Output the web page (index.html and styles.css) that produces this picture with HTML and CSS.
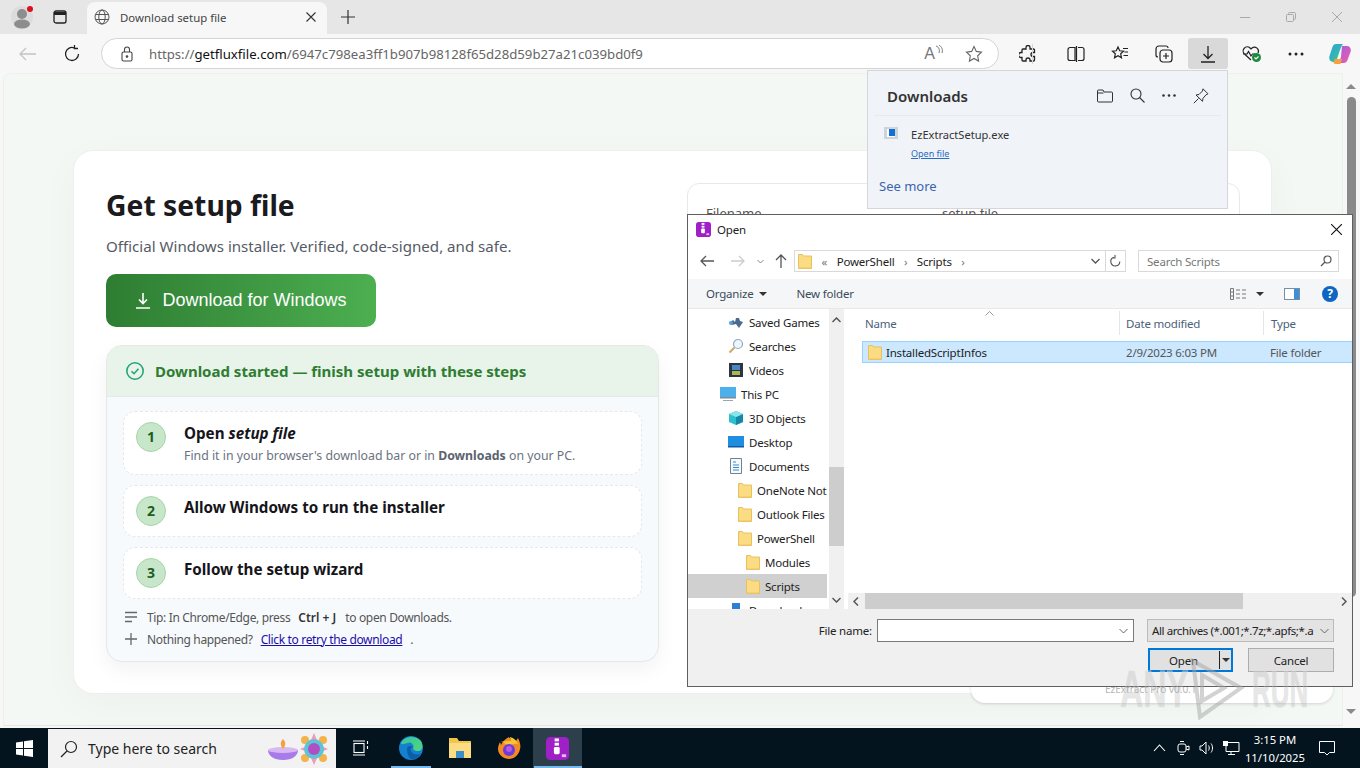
FILE: index.html
```html
<!DOCTYPE html>
<html lang="en">

<head>
  <meta charset="UTF-8">
  <title>Download setup file</title>
  <link rel="stylesheet" href="styles.css">
</head>

<body>
  <svg class="defs" width="0" height="0">
    <symbol id="folder" viewBox="0 0 14 16">
      <path d="M.5 1.500h4l1 1.500h8v12.500H.5z" fill="#fbdc82" stroke="#e6c161" stroke-width="1" />
      <path d="M1 14.500h12v1H1z" fill="#eec766" />
    </symbol>
    <symbol id="appicon" viewBox="0 0 16 16">
      <rect width="16" height="16" rx="3" fill="#a020c8" />
      <rect x="6" y="1" width="3" height="2" fill="#fff" />
      <rect x="6" y="4" width="3" height="2" fill="#fff" />
      <rect x="5.500" y="7" width="4" height="5" rx="1" fill="#fff" />
      <rect x="11" y="12" width="3" height="2" fill="#e6b8f2" />
    </symbol>
  </svg>

  <div class="desktop">
    <div class="tabstrip">
      <div class="avatar">
        <svg width="24" height="26" viewBox="0 0 24 26">
          <circle cx="11" cy="13" r="11" fill="#dcdcdc" />
          <circle cx="11" cy="10" r="5" fill="#8d8d8d" />
          <ellipse cx="11" cy="20" rx="8" ry="4.500" fill="#8d8d8d" />
          <circle cx="19" cy="5" r="3" fill="#d8121f" />
        </svg>
      </div>
      <svg class="tab-actions" width="16" height="16" viewBox="0 0 16 16" fill="none" stroke="#222" stroke-width="1.300">
        <rect x="2" y="2" width="12" height="12" rx="2" />
        <path d="M2 4.500h12" stroke-width="3" />
      </svg>
      <div class="tab">
        <svg width="16" height="16" viewBox="0 0 16 16" fill="none" stroke="#555" stroke-width="1">
          <circle cx="8" cy="8" r="7" />
          <ellipse cx="8" cy="8" rx="3.200" ry="7" />
          <path d="M1.500 5.500h13M1.500 10.500h13" />
        </svg>
        <span class="tab-title">Download setup file</span>
        <svg width="10" height="10" viewBox="0 0 10 10" stroke="#333" stroke-width="1.100">
          <path d="M.5.500l9 9M9.500.500l-9 9" />
        </svg>
      </div>
      <svg class="new-tab" width="14" height="14" viewBox="0 0 14 14" stroke="#333" stroke-width="1.200">
        <path d="M7 0v14M0 7h14" />
      </svg>
      <div class="win-controls">
        <svg width="10" height="10" viewBox="0 0 10 10" stroke="#a8a8a8"><path d="M0 5.500h10" /></svg>
        <svg width="10" height="10" viewBox="0 0 10 10" fill="none" stroke="#a8a8a8"><rect x=".5" y="2.500" width="7" height="7" rx="1" /><path d="M2.500 2.500v-1a1 1 0 0 1 1-1h5a1 1 0 0 1 1 1v5a1 1 0 0 1-1 1h-1" /></svg>
        <svg width="10" height="10" viewBox="0 0 10 10" stroke="#a8a8a8"><path d="M0 0l10 10M10 0L0 10" /></svg>
      </div>
    </div>

    <div class="toolbar">
      <svg class="tb-back" width="18" height="14" viewBox="0 0 18 14" fill="none" stroke="#c4c4c4" stroke-width="1.300">
        <path d="M17 7H1M7 1L1 7l6 6" />
      </svg>
      <svg class="tb-reload" width="18" height="18" viewBox="0 0 18 18" fill="none" stroke="#222" stroke-width="1.300">
        <path d="M15.500 9A6.500 6.500 0 1 1 11 2.800M11.500 0v3.500H15" />
      </svg>
      <div class="addressbar">
        <svg width="12" height="16" viewBox="0 0 12 16" fill="none" stroke="#444" stroke-width="1.100">
          <rect x="1" y="6" width="10" height="9" rx="1.500" />
          <path d="M3.500 6V3.500a2.500 2.500 0 0 1 5 0V6" />
          <circle cx="6" cy="10.500" r=".8" fill="#444" />
        </svg>
        <div class="url">https://<b>getfluxfile.com</b>/6947c798ea3ff1b907b98128f65d28d59b27a21c039bd0f9</div>
        <div class="read-aloud">A<svg width="8" height="10" viewBox="0 0 8 10" fill="none" stroke="#777"><path d="M1 1c3 1 4 4 3 7M4 0c3 2 4 5 3 8" /></svg></div>
        <svg width="18" height="18" viewBox="0 0 18 18" fill="none" stroke="#666" stroke-width="1.100">
          <path d="M9 1.500l2.300 4.900 5.200.7-3.800 3.700.9 5.300L9 13.500l-4.600 2.600.9-5.300L1.500 7.100l5.200-.7z" />
        </svg>
      </div>
      <div class="tb-icons">
        <span class="tb-slot">
          <svg width="18" height="18" viewBox="0 0 18 18" fill="none" stroke="#222" stroke-width="1.300">
            <path d="M7 2.500a2 2 0 0 1 4 0V4h3.500a1 1 0 0 1 1 1v2.500H14a2 2 0 0 0 0 4h1.500V15a1 1 0 0 1-1 1H11v-1a2 2 0 0 0-4 0v1H4a1 1 0 0 1-1-1v-2.500H2a2 2 0 0 1 0-5h1V5a1 1 0 0 1 1-1h3z" />
          </svg>
        </span>
        <span class="tb-sep"></span>
        <span class="tb-slot">
          <svg width="18" height="16" viewBox="0 0 18 16" fill="none" stroke="#222" stroke-width="1.200">
            <path d="M8 1.500H3a2 2 0 0 0-2 2v9a2 2 0 0 0 2 2h5zM9.500 0v16M11 1.500h4a2 2 0 0 1 2 2v9a2 2 0 0 1-2 2h-4" />
          </svg>
        </span>
        <span class="tb-slot">
          <svg width="18" height="18" viewBox="0 0 18 18" fill="none" stroke="#222" stroke-width="1.200">
            <path d="M7 2l1.700 3.800 3.800.4-2.800 2.600.8 4L7 10.800l-3.500 2 .8-4L1.500 6.200l3.800-.4zM12 3.500h5M13.500 7H17M12.500 10.500H17" />
          </svg>
        </span>
        <span class="tb-slot">
          <svg width="18" height="18" viewBox="0 0 18 18" fill="none" stroke="#222" stroke-width="1.200">
            <rect x="5" y="5" width="12" height="12" rx="3" />
            <path d="M11 8v6M8 11h6M13 3a2 2 0 0 0-2-2H4a3 3 0 0 0-3 3v6a2 2 0 0 0 2 2" />
          </svg>
        </span>
        <span class="tb-slot is-active">
          <svg width="16" height="18" viewBox="0 0 16 18" fill="none" stroke="#222" stroke-width="1.300">
            <path d="M8 1v12M3.500 9L8 13.500 12.500 9M1 17h14" />
          </svg>
        </span>
        <span class="tb-slot">
          <svg width="20" height="18" viewBox="0 0 20 18" fill="none" stroke="#222" stroke-width="1.200">
            <path d="M9 15L2.500 9A4 4 0 0 1 8 3l1 1 1-1a4 4 0 0 1 6 5M1 9h4l1.500-2.500L9 11l1.500-2H13" />
            <circle cx="14.500" cy="12.500" r="4.500" fill="#1f8a3b" stroke="none" />
            <path d="M12.500 12.500l1.500 1.500 2.500-2.500" stroke="#fff" />
          </svg>
        </span>
        <span class="tb-slot">
          <svg width="16" height="4" viewBox="0 0 16 4" fill="#222"><circle cx="2" cy="2" r="1.500" /><circle cx="8" cy="2" r="1.500" /><circle cx="14" cy="2" r="1.500" /></svg>
        </span>
        <span class="tb-slot">
          <svg width="22" height="22" viewBox="0 0 22 22">
            <defs>
              <linearGradient id="cp1" x1="0" y1="0" x2="1" y2="1"><stop offset="0" stop-color="#2a9fe8" /><stop offset="1" stop-color="#3ecb7c" /></linearGradient>
              <linearGradient id="cp2" x1="0" y1="0" x2="1" y2="1"><stop offset="0" stop-color="#a35be8" /><stop offset="1" stop-color="#ef5fa0" /></linearGradient>
            </defs>
            <path d="M7 1h7c-1 1-2 3-3 6l-3 9c-.5 2-2 3-3.500 3H4c-3 0-4.500-3-3.500-6l3-9C4 2 5.500 1 7 1z" fill="url(#cp1)" />
            <path d="M13 3h5c3 0 4.500 3 3.500 6l-3 8c-.5 2-2 3-4 3H9c1-1 2-3 3-6z" fill="url(#cp2)" />
            <path d="M6 16h7l-1.500 5H7c-2 0-2.500-1-2.500-2z" fill="#f6a13c" />
          </svg>
        </span>
      </div>
    </div>

    <div class="viewport">
      <main class="page">
        <div class="card">
          <section class="col-left">
            <h1>Get setup file</h1>
            <p class="lead">Official Windows installer. Verified, code-signed, and safe.</p>
            <a class="download-btn" href="#">
              <svg width="16" height="17" viewBox="0 0 16 17" fill="none" stroke="#fff" stroke-width="1.600">
                <path d="M8 1v10M4 7.500L8 11.500l4-4M1 16h14" />
              </svg>
              Download for Windows
            </a>
            <div class="steps-panel">
              <div class="steps-head">
                <svg width="20" height="20" viewBox="0 0 20 20" fill="none" stroke="#22a67a" stroke-width="1.600">
                  <circle cx="10" cy="10" r="8.200" />
                  <path d="M6.500 10.200l2.500 2.500 4.500-5" />
                </svg>
                Download started — finish setup with these steps
              </div>
              <div class="steps-body">
                <div class="step step-long">
                  <div class="step-num">1</div>
                  <div>
                    <div class="step-title">Open <em>setup file</em></div>
                    <div class="step-desc">Find it in your browser's download bar or in <b>Downloads</b> on your PC.</div>
                  </div>
                </div>
                <div class="step">
                  <div class="step-num">2</div>
                  <div class="step-title">Allow Windows to run the installer</div>
                </div>
                <div class="step">
                  <div class="step-num">3</div>
                  <div class="step-title">Follow the setup wizard</div>
                </div>
                <div class="tip">
                  <svg width="12" height="12" viewBox="0 0 12 12" stroke="#666" stroke-width="1.300"><path d="M0 1.500h12M0 6h12M0 10.500h7" /></svg>
                  <span>Tip: In Chrome/Edge, press</span><b>Ctrl + J</b><span>to open Downloads.</span>
                </div>
                <div class="tip">
                  <svg width="12" height="12" viewBox="0 0 12 12" stroke="#666" stroke-width="1.300"><path d="M6 0v12M0 6h12" /></svg>
                  <span>Nothing happened?</span><a href="#">Click to retry the download</a><span>.</span>
                </div>
              </div>
            </div>
          </section>
          <section class="col-right">
            <div class="info-card">
              <div class="info-row"><span>Filename</span><span>setup file</span></div>
            </div>
          </section>
        </div>
      </main>
      <div class="page-scroll">
        <span class="arrow-up"></span>
        <span class="page-thumb"></span>
        <span class="arrow-down"></span>
      </div>
    </div>

    <footer class="taskbar">
      <svg class="start" width="17" height="17" viewBox="0 0 17 17" fill="#fff">
        <path d="M0 2.400L7 1.400V8H0zM8 1.200L17 0v8H8zM0 9h7v6.600l-7-1zM8 9h9v8l-9-1.200z" />
      </svg>
      <div class="searchbox">
        <svg width="18" height="18" viewBox="0 0 18 18" fill="none" stroke="#222" stroke-width="1.200">
          <circle cx="11" cy="7" r="5.500" />
          <path d="M7 11l-6 6" />
        </svg>
        <span class="search-text">Type here to search</span>
        <svg class="doodle" width="66" height="32" viewBox="0 0 66 32">
          <path d="M3 17h30c0 6-6 10-15 10S3 23 3 17z" fill="#a77be8" />
          <ellipse cx="18" cy="17" rx="15" ry="3" fill="#d9b8f2" />
          <path d="M18 6c3 3 3 6 0 10-3-4-3-7 0-10z" fill="#f4a13c" />
          <g fill="#f29ab8"><path d="M49 0l3 7h-6zM49 32l-3-7h6zM35 16l7-3v6zM63 16l-7 3v-6z" /></g>
          <g fill="#f5b24a"><circle cx="40" cy="7" r="4" /><circle cx="58" cy="7" r="4" /><circle cx="40" cy="25" r="4" /><circle cx="58" cy="25" r="4" /></g>
          <circle cx="49" cy="16" r="10" fill="#5cc4d6" />
          <circle cx="49" cy="16" r="6" fill="#b04fc4" />
        </svg>
      </div>
      <div class="task-icons">
        <span class="task-slot">
          <svg width="16" height="16" viewBox="0 0 16 16" fill="none" stroke="#fff" stroke-width="1.100">
            <rect x="1" y="3.500" width="10" height="9" />
            <path d="M0 1h12M0 15h12M14.500 1v3M14.500 6v3" />
          </svg>
        </span>
        <span class="task-slot is-open">
          <svg width="24" height="24" viewBox="0 0 24 24">
            <defs><linearGradient id="edge" x1="0" y1="0" x2="1" y2="1"><stop offset="0" stop-color="#36c5a0" /><stop offset="1" stop-color="#52d57e" /></linearGradient></defs>
            <circle cx="12" cy="12" r="12" fill="#1380d0" />
            <path d="M2 7C5 0 16-1 21 4c3 3 3 8 1 10-2 2-7 1-8-1 2-4-2-8-6-6-3 1-5 2-6 0z" fill="url(#edge)" />
            <path d="M8 13c0-3 4-4 6-2-2 0-3 2-2 4 1 3 6 5 10 2-2 4-6 7-10 6-3-2-4-6-4-10z" fill="#0c5ea8" />
          </svg>
        </span>
        <span class="task-slot">
          <svg width="24" height="22" viewBox="0 0 24 22">
            <path d="M1 1h8l2 3h12v17H1z" fill="#f1c54c" />
            <rect x="1" y="6" width="22" height="15" fill="#fbdc82" />
            <rect x="8" y="14" width="8" height="7" fill="#3a8fc9" />
          </svg>
        </span>
        <span class="task-slot">
          <svg width="24" height="24" viewBox="0 0 24 24">
            <path d="M12 1c1 3 5 2 7 4l2-3c2 4 3 8 2 11-1 6-6 10-11 10S1 19 1 13c0-3 1-5 2-7l1 3c1-3 4-6 8-8z" fill="#f58a23" />
            <path d="M4 6c3-1 3 3 8 3 3 0 4-2 9-1-1-3-4-6-8-7 0 2 2 3 1 4-3 0-6 0-10 1z" fill="#f4c534" />
            <circle cx="12" cy="14" r="6" fill="#6e3ad8" />
            <circle cx="12" cy="13" r="3" fill="#b45be0" />
          </svg>
        </span>
        <span class="task-slot is-active">
          <svg width="23" height="23"><use href="#appicon" /></svg>
        </span>
      </div>
      <div class="tray">
        <svg class="tray-chevron" width="13" height="8" viewBox="0 0 13 8" fill="none" stroke="#fff" stroke-width="1.100"><path d="M1 7l5.500-6L12 7" /></svg>
        <svg width="13" height="16" viewBox="0 0 13 16" fill="none" stroke="#fff" stroke-width="1"><rect x="1" y="4" width="8" height="8" rx="2" /><path d="M9 7l3-1v4l-3-1M3 1.500h4M3 14.500h4" /></svg>
        <svg width="16" height="14" viewBox="0 0 16 14" fill="none" stroke="#fff" stroke-width="1"><path d="M1 5h2l4-4v12L3 9H1zM9.500 4.500c1 1.500 1 3.500 0 5M12 2.500c2 2.500 2 6.500 0 9" /></svg>
        <svg width="17" height="15" viewBox="0 0 17 15" fill="none" stroke="#fff" stroke-width="1"><path d="M5 1.500h11v9H3V5M8 10.500v3M5 13.500h7" /><rect x=".5" y=".5" width="4" height="4" fill="#fff" /></svg>
        <div class="clock">
          <div>3:15 PM</div>
          <div>11/10/2025</div>
        </div>
        <svg width="16" height="16" viewBox="0 0 16 16" fill="none" stroke="#fff" stroke-width="1"><path d="M.5 1.500h15v11h-5L8 15l-2.500-2.500h-5z" /></svg>
      </div>
    </footer>
  </div>

  <!-- downloads flyout -->
  <div class="flyout">
    <div class="flyout-head">
      <span class="flyout-title">Downloads</span>
      <div class="flyout-icons">
        <svg width="16" height="14" viewBox="0 0 16 14" fill="none" stroke="#333" stroke-width="1"><path d="M.5 12V2a1 1 0 0 1 1-1H6l1 2h7.500a1 1 0 0 1 1 1v8a1 1 0 0 1-1 1h-13a1 1 0 0 1-1-1zM.5 4h6" /></svg>
        <svg width="15" height="15" viewBox="0 0 15 15" fill="none" stroke="#333" stroke-width="1.100"><circle cx="6" cy="6" r="5" /><path d="M9.500 9.500l5 5" /></svg>
        <svg width="14" height="3" viewBox="0 0 14 3" fill="#333"><circle cx="1.500" cy="1.500" r="1.300" /><circle cx="7" cy="1.500" r="1.300" /><circle cx="12.500" cy="1.500" r="1.300" /></svg>
        <svg width="16" height="16" viewBox="0 0 16 16" fill="none" stroke="#333" stroke-width="1"><path d="M10 .8l5 5-2 1-3 3.500-.5 3L3 7l3-.5L9.500 3zM5.500 10.500L.8 15.200" /></svg>
      </div>
    </div>
    <div class="flyout-item">
      <svg width="14" height="12" viewBox="0 0 14 12"><rect width="14" height="12" fill="#cfd3da" /><rect x="3" y="2" width="8" height="8" fill="#fff" /><rect x="5" y="2" width="6" height="7" fill="#1170d6" /></svg>
      <div>
        <div class="flyout-name">EzExtractSetup.exe</div>
        <a class="flyout-open" href="#">Open file</a>
      </div>
    </div>
    <a class="flyout-more" href="#">See more</a>
  </div>

  <!-- bottom toast behind the dialog -->
  <div class="version-pill">EzExtract Pro v0.0.1</div>

  <!-- file open dialog -->
  <div class="dialog">
    <div class="dlg-title">
      <svg width="15" height="15"><use href="#appicon" /></svg>
      <span>Open</span>
      <svg class="dlg-close" width="11" height="11" viewBox="0 0 11 11" stroke="#111" stroke-width="1.100"><path d="M0 0l11 11M11 0L0 11" /></svg>
    </div>
    <div class="dlg-nav">
      <svg width="14" height="12" viewBox="0 0 14 12" fill="none" stroke="#555" stroke-width="1.300"><path d="M14 6H1M6 1L1 6l5 5" /></svg>
      <svg class="nav-off" width="14" height="12" viewBox="0 0 14 12" fill="none" stroke="#ccc" stroke-width="1.300"><path d="M0 6h13M8 1l5 5-5 5" /></svg>
      <svg class="nav-caret" width="7" height="5" viewBox="0 0 7 5" fill="none" stroke="#888"><path d="M.5 1l3 3 3-3" /></svg>
      <svg class="nav-up" width="12" height="14" viewBox="0 0 12 14" fill="none" stroke="#555" stroke-width="1.300"><path d="M6 14V1M1 6l5-5 5 5" /></svg>
      <div class="dlg-path">
        <svg width="14" height="16"><use href="#folder" /></svg>
        <span class="crumb-mark">«</span><span>PowerShell</span><span class="crumb-mark">›</span><span>Scripts</span><span class="crumb-mark">›</span>
        <svg class="path-drop" width="9" height="6" viewBox="0 0 9 6" fill="none" stroke="#555" stroke-width="1.300"><path d="M.5 1l4 4 4-4" /></svg>
        <span class="path-refresh">
          <svg width="11" height="12" viewBox="0 0 11 12" fill="none" stroke="#555" stroke-width="1.100"><path d="M9.800 6.500a4.500 4.500 0 1 1-6-4.300M5 0v3H2" /></svg>
        </span>
      </div>
      <div class="dlg-search">
        <span>Search Scripts</span>
        <svg width="12" height="12" viewBox="0 0 12 12" fill="none" stroke="#555" stroke-width="1.200"><circle cx="7.500" cy="4.500" r="3.500" /><path d="M5 7l-4 4" /></svg>
      </div>
    </div>
    <div class="dlg-tools">
      <span class="tool-btn">Organize<i class="caret"></i></span>
      <span class="tool-btn new-folder">New folder</span>
      <div class="tool-right">
        <svg width="16" height="12" viewBox="0 0 16 12" fill="none" stroke="#777"><path d="M.5.500h3v11h-3zM.5 4h3M.5 8h3M6 2h4M12 2h4M6 6h4M12 6h4M6 10h4M12 10h4" /></svg>
        <i class="caret"></i>
        <svg class="pane-ico" width="16" height="12" viewBox="0 0 16 12"><rect x=".5" y=".5" width="15" height="11" fill="#fff" stroke="#7a8ea3" /><rect x="10" y="1" width="5" height="10" fill="#3d8fd6" /></svg>
        <svg width="16" height="16" viewBox="0 0 16 16"><circle cx="8" cy="8" r="8" fill="#0f66c2" /><text x="8" y="12" text-anchor="middle" class="help-q">?</text></svg>
      </div>
    </div>
    <div class="dlg-main">
      <div class="tree">
        <div class="tree-row lvl1">
          <svg width="16" height="16" viewBox="0 0 16 16"><path d="M1 9l4-3 2 2 1-4h3l1 3 3 1-2 3-2 3-3-4-4 1z" fill="#4b6a90" /><circle cx="3" cy="9" r="2" fill="#5aa0e0" /></svg>
          <span>Saved Games</span>
        </div>
        <div class="tree-row lvl1">
          <svg width="16" height="16" viewBox="0 0 16 16" fill="none" stroke="#93a8bd" stroke-width="1.200"><circle cx="10" cy="6" r="4.500" fill="#eef5fb" /><path d="M6.500 9.500l-5 5" stroke-width="2" stroke="#c9a96a" /></svg>
          <span>Searches</span>
        </div>
        <div class="tree-row lvl1">
          <svg width="16" height="16" viewBox="0 0 16 16"><rect x="1" y="1" width="14" height="14" fill="#2c3540" /><rect x="4" y="3" width="8" height="5" fill="#4a87c2" /><rect x="4" y="9" width="8" height="4" fill="#a9b94f" /></svg>
          <span>Videos</span>
        </div>
        <div class="tree-row lvl0">
          <svg width="16" height="16" viewBox="0 0 16 16"><rect x="0" y="1" width="16" height="10" fill="#4eb0ea" /><rect x="0" y="11" width="16" height="1.500" fill="#7d8b98" /><rect x="3" y="14" width="10" height="1" fill="#9aa7b2" /></svg>
          <span>This PC</span>
        </div>
        <div class="tree-row lvl1">
          <svg width="16" height="16" viewBox="0 0 16 16"><path d="M1 4l7-3 7 3v8l-7 3-7-3z" fill="#2cc0cc" /><path d="M8 7l7-3v8l-7 3z" fill="#1787a6" /><path d="M1 4l7-3 7 3-7 3z" fill="#8ce3ec" /></svg>
          <span>3D Objects</span>
        </div>
        <div class="tree-row lvl1">
          <svg width="16" height="16" viewBox="0 0 16 16"><rect x="0" y="2" width="16" height="11" fill="#1f8ee0" /><rect x="0" y="12" width="16" height="1.500" fill="#0f5d9e" /></svg>
          <span>Desktop</span>
        </div>
        <div class="tree-row lvl1">
          <svg width="16" height="16" viewBox="0 0 16 16" fill="none" stroke="#6d8296"><path d="M2.500.500h11v15h-11z" fill="#f6f9fc" /><path d="M5 4h3M5 7h6M5 9.500h6M5 12h6" stroke="#3b87c4" /></svg>
          <span>Documents</span>
        </div>
        <div class="tree-row lvl2"><svg width="14" height="16"><use href="#folder" /></svg><span>OneNote Not</span></div>
        <div class="tree-row lvl2"><svg width="14" height="16"><use href="#folder" /></svg><span>Outlook Files</span></div>
        <div class="tree-row lvl2"><svg width="14" height="16"><use href="#folder" /></svg><span>PowerShell</span></div>
        <div class="tree-row lvl3"><svg width="14" height="16"><use href="#folder" /></svg><span>Modules</span></div>
        <div class="tree-row lvl3 is-selected"><svg width="14" height="16"><use href="#folder" /></svg><span>Scripts</span></div>
        <div class="tree-row lvl1">
          <svg width="16" height="16" viewBox="0 0 16 16"><rect x="4" y="1" width="8" height="12" fill="#2c7fd3" /></svg>
          <span>Downloads</span>
        </div>
      </div>
      <div class="tree-scroll">
        <svg width="9" height="6" viewBox="0 0 9 6" fill="none" stroke="#555" stroke-width="1.500"><path d="M.5 5l4-4 4 4" /></svg>
        <span class="tree-thumb"></span>
        <svg width="9" height="6" viewBox="0 0 9 6" fill="none" stroke="#555" stroke-width="1.500"><path d="M.5 1l4 4 4-4" /></svg>
      </div>
      <div class="list">
        <div class="list-head">
          <span class="col-name">Name<svg class="sort" width="9" height="5" viewBox="0 0 9 5" fill="none" stroke="#999"><path d="M.5 4.500l4-4 4 4" /></svg></span>
          <span class="col-date">Date modified</span>
          <span class="col-type">Type</span>
        </div>
        <div class="list-body">
          <div class="list-row">
            <span class="col-name"><svg width="14" height="16"><use href="#folder" /></svg>InstalledScriptInfos</span>
            <span class="col-date">2/9/2023 6:03 PM</span>
            <span class="col-type">File folder</span>
          </div>
        </div>
        <div class="hscroll">
          <svg width="6" height="9" viewBox="0 0 6 9" fill="none" stroke="#555" stroke-width="1.500"><path d="M5 .5l-4 4 4 4" /></svg>
          <span class="hthumb"></span>
          <svg width="6" height="9" viewBox="0 0 6 9" fill="none" stroke="#555" stroke-width="1.500"><path d="M1 .5l4 4-4 4" /></svg>
        </div>
      </div>
    </div>
    <div class="dlg-bottom">
      <div class="file-row">
        <label>File name:</label>
        <div class="file-input">
          <svg width="9" height="6" viewBox="0 0 9 6" fill="none" stroke="#666"><path d="M.5 1l4 4 4-4" /></svg>
        </div>
        <div class="file-filter">
          <span>All archives (*.001;*.7z;*.apfs;*.a</span>
          <svg width="9" height="6" viewBox="0 0 9 6" fill="none" stroke="#666"><path d="M.5 1l4 4 4-4" /></svg>
        </div>
      </div>
      <div class="btn-row">
        <div class="btn-open"><span>Open</span><i class="split"></i><i class="caret"></i></div>
        <div class="btn-cancel">Cancel</div>
      </div>
    </div>
  </div>

  <!-- watermark -->
  <div class="watermark">
    <span class="wm-any">ANY</span>
    <svg width="56" height="62" viewBox="0 0 56 62" fill="none" stroke="rgba(165,165,165,.5)" stroke-width="4"><path d="M3 3l48 27-41 29zM12 17v26l22-13z" /></svg>
    <span class="wm-run">RUN</span>
  </div>
</body>

</html>
```

FILE: styles.css
```css
* {
  box-sizing: border-box;
}

html,
body {
  margin: 0;
  padding: 0;
  height: 768px;
  overflow: hidden;
}

body {
  position: relative;
  width: 1360px;
  font-family: "Noto Sans", sans-serif;
  color: #1a1a1a;
  background: #f7f7f7;
}

svg {
  display: block;
  flex: none;
}

.defs {
  position: absolute;
}

.desktop {
  display: flex;
  flex-direction: column;
  height: 768px;
}

/* browser chrome */
.tabstrip {
  display: flex;
  align-items: center;
  height: 34px;
  background: #e6e6e6;
  flex: none;
}

.avatar {
  margin-left: 11px;
  margin-top: -1px;
}

.tab-actions {
  margin-left: 17px;
}

.tab {
  display: flex;
  align-items: center;
  align-self: flex-end;
  width: 240px;
  height: 32px;
  margin-left: 19px;
  padding: 0 11px 2px 7px;
  background: #f7f7f7;
  border-radius: 8px 8px 0 0;
}

.tab-title {
  flex: 1;
  margin-left: 10px;
  font-size: 11.400px;
  color: #444;
}

.new-tab {
  margin-left: 14px;
}

.win-controls {
  display: flex;
  gap: 36px;
  margin-left: auto;
  margin-right: 18px;
}

.toolbar {
  display: flex;
  align-items: center;
  height: 39px;
  background: #f7f7f7;
  flex: none;
}

.tb-back {
  margin-left: 19px;
}

.tb-reload {
  margin-left: 26px;
}

.addressbar {
  display: flex;
  align-items: center;
  flex: none;
  width: 898px;
  height: 31px;
  margin-left: 20px;
  padding: 0 15px 0 19px;
  background: #fff;
  border: 1px solid #d4d4d4;
  border-radius: 16px;
}

.url {
  flex: 1;
  margin-left: 16px;
  font-size: 13.200px;
  color: #666;
  white-space: nowrap;
}

.url b {
  font-weight: 400;
  color: #111;
}

.read-aloud {
  display: flex;
  align-items: flex-start;
  margin-right: 22px;
  font-family: "Liberation Sans", sans-serif;
  font-size: 16px;
  color: #777;
}

.tb-icons {
  display: flex;
  align-items: center;
  margin-left: 9px;
}

.tb-slot {
  display: flex;
  align-items: center;
  justify-content: center;
  width: 40px;
  height: 31px;
  margin-right: 4px;
  border-radius: 3px;
}

.tb-slot.is-active {
  background: #d9d9d9;
}

.tb-sep {
  width: 1px;
  height: 20px;
  margin-left: -20px;
  background: #d6d6d6;
}

.tb-sep + .tb-slot {
  margin-left: 23px;
}

/* page */
.viewport {
  display: flex;
  flex: 1;
  min-height: 0;
  margin-left: 3px;
}

.page {
  flex: 1;
  height: 653px;
  padding: 76px 0 0 69px;
  background: #f4f8f4;
  border: 1px solid #eef0ee;
  border-bottom-color: #e4e6e4;
  border-radius: 8px 0 0 0;
}

.card {
  display: flex;
  gap: 28px;
  width: 1199px;
  height: 544px;
  padding: 32px 31px 0 32px;
  background: #fff;
  border: 1px solid #edf0ed;
  border-radius: 20px;
  box-shadow: 0 10px 40px rgba(0, 0, 0, 0.03);
}

.col-left {
  display: flex;
  flex-direction: column;
  align-items: flex-start;
  width: 553px;
  flex: none;
}

.col-right {
  width: 553px;
  flex: none;
}

h1 {
  margin: 2px 0 0;
  font-size: 28.300px;
  line-height: 40px;
  font-weight: 700;
  color: #1a1a1f;
}

.lead {
  margin: 9px 0 0;
  font-size: 15.100px;
  line-height: 24px;
  color: #555b66;
}

.download-btn {
  display: flex;
  align-items: center;
  justify-content: center;
  gap: 11px;
  width: 270px;
  height: 53px;
  margin-top: 16px;
  background: linear-gradient(90deg, #2e7d32, #4caf50);
  border-radius: 10px;
  font-family: "Liberation Sans", sans-serif;
  font-size: 18px;
  color: #fff;
  text-decoration: none;
}

.steps-panel {
  width: 553px;
  height: 317px;
  margin-top: 18px;
  background: #f7fafd;
  border: 1px solid #e4e9e5;
  border-radius: 16px;
  box-shadow: 0 8px 20px rgba(0, 0, 0, 0.05);
  overflow: hidden;
}

.steps-head {
  display: flex;
  align-items: center;
  gap: 10px;
  height: 51px;
  padding: 0 0 0 18px;
  background: #e8f3ea;
  border-bottom: 1px solid #e2ebe4;
  font-size: 15px;
  font-weight: 700;
  color: #2e7d32;
}

.steps-body {
  padding: 14px 16px 0;
}

.step {
  display: flex;
  gap: 18px;
  min-height: 52px;
  padding: 10px 8px 8px 12px;
  margin-bottom: 10px;
  background: #fff;
  border: 1px dashed #e5e8ec;
  border-radius: 12px;
}

.step-long {
  padding-bottom: 9px;
}

.step:nth-child(3) {
  margin-bottom: 7px;
}

.step-num {
  flex: none;
  width: 30px;
  height: 30px;
  background: #c8e6c9;
  border: 1px solid #a5d6a7;
  border-radius: 50%;
  font-size: 14px;
  font-weight: 700;
  line-height: 28px;
  text-align: center;
  color: #1b5e20;
}

.step-title {
  font-size: 15.200px;
  font-weight: 700;
  line-height: 22px;
  color: #15151a;
}

.step-title em {
  font-style: italic;
}

.step-desc {
  margin-top: 2px;
  font-size: 12.300px;
  line-height: 19px;
  color: #6b7280;
}

.step-desc b {
  color: #5c636e;
}

.tip {
  display: flex;
  align-items: center;
  height: 22px;
  font-size: 12px;
  letter-spacing: -0.35px;
  color: #555;
}

.tip svg {
  margin-right: 10px;
  margin-left: 2px;
}

.tip b {
  margin: 0 9px 0 8px;
  font-weight: 600;
  letter-spacing: 0;
  color: #333;
}

.tip a {
  margin: 0 8px;
  color: #1a0dab;
}

.info-card {
  width: 553px;
  height: 200px;
  background: #fff;
  border: 1px solid #e6e9ec;
  border-radius: 12px;
}

.info-row {
  display: flex;
  padding: 20px 18px 0;
  font-size: 13px;
  color: #555;
}

.info-row span:first-child {
  width: 236px;
}

.page-scroll {
  position: relative;
  width: 17px;
  flex: none;
  height: 653px;
}

.arrow-up,
.arrow-down {
  position: absolute;
  left: 3px;
  border-left: 5px solid transparent;
  border-right: 5px solid transparent;
}

.arrow-up {
  top: 11px;
  border-bottom: 5px solid #8a8a8a;
}

.arrow-down {
  top: 636px;
  border-top: 5px solid #8a8a8a;
}

.page-thumb {
  position: absolute;
  top: 24px;
  left: 4px;
  width: 9px;
  height: 500px;
  background: #8a8a8a;
  border-radius: 5px;
}

/* taskbar */
.taskbar {
  display: flex;
  align-items: center;
  height: 40px;
  flex: none;
  background: #04141f;
  color: #fff;
}

.start {
  margin-left: 16px;
}

.searchbox {
  display: flex;
  align-items: center;
  align-self: flex-end;
  width: 288px;
  height: 39px;
  margin-left: 15px;
  padding-left: 12px;
  background: #f2f2f2;
  color: #222;
}

.search-text {
  flex: 1;
  margin-left: 10px;
  font-size: 14px;
}

.doodle {
  margin-right: 5px;
}

.task-icons {
  display: flex;
}

.task-slot {
  position: relative;
  display: flex;
  align-items: center;
  justify-content: center;
  width: 49px;
  height: 40px;
}

.task-slot:first-child,
.task-slot.is-open {
  width: 50px;
}

.task-slot:nth-child(3) {
  width: 48px;
}

.task-slot.is-active {
  background: #2d3f4b;
}

.task-slot.is-open::after,
.task-slot.is-active::after {
  content: "";
  position: absolute;
  bottom: 0;
  left: 5px;
  right: 5px;
  height: 2px;
  background: #76b9ed;
}

.task-slot.is-active::after {
  left: 1px;
  right: 0;
}

.tray {
  display: flex;
  align-items: center;
  gap: 8.500px;
  margin-left: auto;
  margin-right: 25px;
}

.tray-chevron {
  margin-right: 2.500px;
}

.clock {
  margin-left: -4px;
  margin-right: 5.500px;
  padding-top: 1px;
  font-size: 11.300px;
  line-height: 18px;
  text-align: center;
}

/* downloads flyout */
.flyout {
  position: absolute;
  top: 70px;
  left: 867px;
  width: 361px;
  height: 139px;
  background: #f0f3f8;
  border: 1px solid #d4d6da;
}

.flyout-head {
  display: flex;
  align-items: center;
  justify-content: space-between;
  height: 45px;
  margin: 0 6px;
  padding: 5px 12px 0 13px;
  border-bottom: 1px solid #e6e9ee;
}

.flyout-title {
  font-size: 15px;
  font-weight: 600;
  color: #333;
}

.flyout-icons {
  display: flex;
  align-items: center;
  gap: 17px;
}

.flyout-item {
  display: flex;
  gap: 13px;
  padding: 11px 0 0 16px;
}

.flyout-name {
  font-size: 11.100px;
  line-height: 16px;
  color: #333;
}

.flyout-open {
  display: block;
  margin-top: 5px;
  font-size: 9px;
  line-height: 12px;
  color: #2a6cc4;
}

.flyout-more {
  display: block;
  margin: 17px 0 0 11px;
  font-size: 13px;
  color: #3b64b0;
  text-decoration: none;
}

.version-pill {
  position: absolute;
  top: 660px;
  left: 971px;
  width: 362px;
  height: 43px;
  padding: 22px 0 0 134px;
  background: #fff;
  border-radius: 0 0 14px 14px;
  box-shadow: 0 1px 3px rgba(0, 0, 0, 0.15);
  font-size: 10px;
  color: #b5b5b5;
}

/* open dialog */
.dialog {
  position: absolute;
  top: 214px;
  left: 687px;
  display: flex;
  flex-direction: column;
  width: 666px;
  height: 473px;
  background: #fff;
  border: 1px solid #5f5f5f;
  font-size: 11.500px;
  letter-spacing: -0.2px;
  color: #222;
}

.dlg-title {
  display: flex;
  align-items: center;
  gap: 6px;
  height: 28px;
  padding-left: 8px;
  flex: none;
}

.dlg-close {
  margin-left: auto;
  margin-right: 10px;
}

.dlg-nav {
  display: flex;
  align-items: center;
  height: 36px;
  padding: 0 0 0 12px;
  flex: none;
}

.nav-off {
  margin-left: 17px;
}

.nav-caret {
  margin-left: 12px;
}

.nav-up {
  margin-left: 11px;
}

.dlg-path {
  display: flex;
  align-items: center;
  gap: 9.500px;
  width: 332px;
  height: 22px;
  margin-left: 7px;
  padding-left: 3px;
  border: 1px solid #d9d9d9;
}

.crumb-mark {
  color: #777;
}

.path-drop {
  margin-left: auto;
}

.path-refresh {
  display: flex;
  align-items: center;
  justify-content: center;
  width: 20px;
  height: 20px;
  margin-left: -4px;
  border-left: 1px solid #d9d9d9;
}

.dlg-search {
  display: flex;
  align-items: center;
  justify-content: space-between;
  width: 201px;
  height: 22px;
  margin-left: 12px;
  padding: 0 6px 0 8px;
  border: 1px solid #d9d9d9;
  color: #777;
}

.dlg-tools {
  display: flex;
  align-items: center;
  height: 30px;
  padding: 0 14px 0 18px;
  background: #f5f6f7;
  border-bottom: 1px solid #e8e8e8;
  flex: none;
}

.tool-btn {
  display: flex;
  align-items: center;
  gap: 5px;
  color: #3a4a5a;
}

.new-folder {
  margin-left: 30px;
}

.caret {
  display: block;
  width: 0;
  height: 0;
  border-left: 4px solid transparent;
  border-right: 4px solid transparent;
  border-top: 4px solid #333;
}

.tool-right {
  display: flex;
  align-items: center;
  gap: 10px;
  margin-left: auto;
}

.pane-ico {
  margin: 0 12px 0 10px;
}

.help-q {
  font-size: 12px;
  font-weight: 700;
  fill: #fff;
}

.dlg-main {
  display: flex;
  height: 300px;
  flex: none;
}

.tree {
  width: 139px;
  padding-top: 1px;
  overflow: hidden;
  flex: none;
}

.tree-row {
  display: flex;
  align-items: center;
  gap: 5px;
  height: 24px;
  white-space: nowrap;
}

.lvl0 {
  padding-left: 32px;
}

.lvl1 {
  padding-left: 40px;
}

.lvl2 {
  padding-left: 50px;
}

.lvl3 {
  padding-left: 58px;
}

.tree-row.is-selected {
  background: #d0d0d0;
}

.tree-scroll {
  position: relative;
  display: flex;
  flex-direction: column;
  align-items: center;
  justify-content: space-between;
  width: 15px;
  padding: 8px 0 6px;
  margin-left: 2px;
  background: #f0f0f0;
  flex: none;
}

.tree-thumb {
  position: absolute;
  top: 158px;
  left: 0;
  width: 15px;
  height: 79px;
  background: #cdcdcd;
}

.list {
  display: flex;
  flex-direction: column;
  flex: 1;
  min-width: 0;
  margin-left: 4px;
  overflow: hidden;
}

.list-head,
.list-row {
  display: flex;
  align-items: center;
  flex: none;
}

.list-head {
  height: 24px;
  margin-top: 2px;
  color: #4c607a;
}

.list-head .col-date,
.list-head .col-type {
  align-self: stretch;
  display: flex;
  align-items: center;
  border-left: 1px solid #e5e5e5;
}

.col-name {
  position: relative;
  display: flex;
  align-items: center;
  gap: 4px;
  width: 271px;
  padding-left: 17px;
  flex: none;
}

.col-date {
  width: 144px;
  padding-left: 6px;
  flex: none;
}

.col-type {
  padding-left: 7px;
  white-space: nowrap;
}

.sort {
  position: absolute;
  top: -5px;
  left: 137px;
}

.list-body {
  flex: 1;
  padding: 6px 0 0 14px;
}

.list-row {
  height: 22px;
  background: #cce8ff;
  border: 1px solid #99d1ff;
  border-right: 0;
  margin-right: -2px;
}

.list-row .col-name {
  width: 256px;
  padding-left: 5px;
}

.list-row .col-date {
  width: 145px;
  padding-left: 7px;
  color: #555;
}

.list-row .col-type {
  padding-left: 6px;
  color: #555;
}

.hscroll {
  display: flex;
  align-items: center;
  justify-content: space-between;
  height: 16px;
  padding: 0 5px;
  background: #f0f0f0;
  position: relative;
  flex: none;
}

.hthumb {
  position: absolute;
  left: 17px;
  top: 0;
  width: 378px;
  height: 16px;
  background: #cdcdcd;
}

.dlg-bottom {
  flex: 1;
  padding-top: 10px;
  background: #f0f0f0;
}

.file-row,
.btn-row {
  display: flex;
  justify-content: flex-end;
  padding-right: 18px;
}

.file-row {
  align-items: center;
}

.file-input {
  display: flex;
  align-items: center;
  justify-content: flex-end;
  width: 257px;
  height: 23px;
  margin-left: 5px;
  padding-right: 5px;
  background: #fff;
  border: 1px solid #7a7a7a;
}

.file-filter {
  display: flex;
  align-items: center;
  justify-content: space-between;
  width: 187px;
  height: 23px;
  margin-left: 13px;
  padding: 0 4px;
  background: #e3e3e3;
  border: 1px solid #bbb;
  letter-spacing: -0.4px;
  white-space: nowrap;
  overflow: hidden;
}

.btn-row {
  gap: 15px;
  margin-top: 6px;
}

.btn-open,
.btn-cancel {
  display: flex;
  align-items: center;
  justify-content: center;
  height: 24px;
}

.btn-open {
  position: relative;
  width: 85px;
  padding-right: 14px;
  background: #e1e1e1;
  border: 2px solid #0078d7;
}

.split {
  position: absolute;
  top: 1px;
  right: 11px;
  width: 1px;
  height: 18px;
  background: #222;
}

.btn-open .caret {
  position: absolute;
  top: 8px;
  right: 1px;
}

.btn-cancel {
  width: 86px;
  background: #e1e1e1;
  border: 1px solid #adadad;
}

/* watermark */
.watermark {
  position: absolute;
  top: 658px;
  left: 1120px;
  display: flex;
  align-items: center;
  height: 62px;
  font-family: "Liberation Sans", sans-serif;
  font-size: 52px;
  font-weight: 700;
  line-height: 52px;
  color: rgba(170, 170, 170, 0.3);
  pointer-events: none;
}

.watermark span {
  display: block;
  transform-origin: left center;
  -webkit-text-stroke: 1px rgba(225, 225, 225, 0.6);
}

.wm-any {
  width: 70px;
  transform: scaleX(0.62);
}

.wm-run {
  width: 58px;
  margin-left: 6px;
  transform: scaleX(0.5);
}
```
